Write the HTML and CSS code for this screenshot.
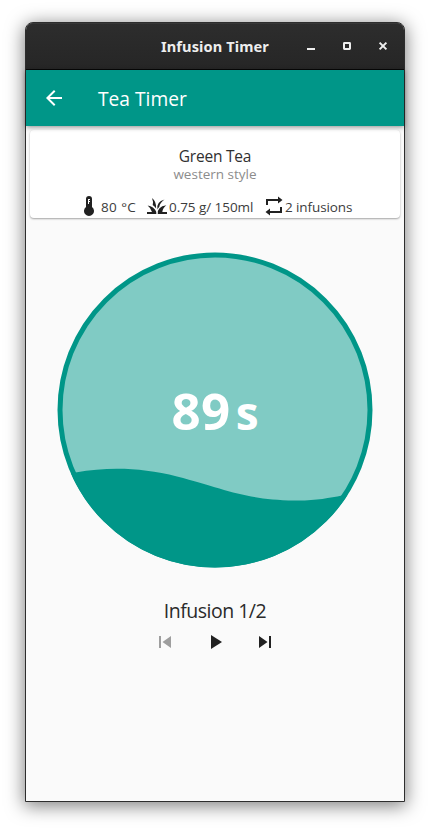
FILE: index.html
```html
<!DOCTYPE html>
<html lang="en">
<head>
<meta charset="utf-8">
<title>Infusion Timer</title>
<link rel="stylesheet" href="styles.css">
</head>
<body>
<div class="window">
  <header class="titlebar">
    <span class="window-title">Infusion Timer</span>
    <div class="controls">
      <svg width="10" height="10" viewBox="0 0 10 10"><path d="M1 7h8v2H1z" fill="#eee"/></svg>
      <svg width="10" height="10" viewBox="0 0 10 10"><rect x="2" y="2" width="6" height="6" rx=".4" fill="none" stroke="#eee" stroke-width="2"/></svg>
      <svg width="10" height="10" viewBox="0 0 10 10"><path d="M1.6 1.6l6.8 6.8M8.4 1.6L1.6 8.4" stroke="#eee" stroke-width="2"/></svg>
    </div>
  </header>
  <nav class="appbar">
    <svg width="24" height="24" viewBox="0 0 24 24"><path d="M20 11H7.83l5.59-5.59L12 4l-8 8 8 8 1.41-1.41L7.83 13H20z" fill="#fff"/></svg>
    <h1>Tea Timer</h1>
  </nav>
  <main>
    <section class="card">
      <h2>Green Tea</h2>
      <p class="style">western style</p>
      <div class="facts">
        <div class="fact temp">
          <svg width="10" height="20" viewBox="0 0 10 20"><path d="M2 3a3 3 0 0 1 6 0v7.9a5 5 0 1 1-6 0z" fill="#212121"/><path d="M4 3h2v1H5v1h1v1H5v2H4z" fill="#fff"/></svg>
          <span>80 °C</span>
        </div>
        <div class="fact amount">
          <svg width="20" height="16" viewBox="0 0 20 16"><path d="M0 16v-2h5Q4 10 .6 7.4Q7 8.5 9 13.2Q9.4 14.4 9.3 16zM5 0Q9.6 3.5 9.1 10.6Q8 8.6 5.7 7.1Q6.6 3.7 5 0zM17.5 1.6Q13 4.7 12.2 9Q11.2 10 10.5 11.4Q9 4.1 17.5 1.6zM19.3 7.2Q15.8 9.8 15.3 14H20v2h-9.2Q10 8.6 19.3 7.2z" fill="#212121"/></svg>
          <span>0.75 g/ 150ml</span>
        </div>
        <div class="fact count">
          <svg width="18" height="20" viewBox="0 0 18 20"><path d="M2 9V4h12M16 11v5H4" fill="none" stroke="#212121" stroke-width="2"/><path d="M13 .5L17.500 4L13 7.500zM5 12.500L.5 16 5 19.500z" fill="#212121"/></svg>
          <span>2 infusions</span>
        </div>
      </div>
    </section>
    <div class="dial">
      <svg class="wave" viewBox="0 0 316 316">
        <defs><clipPath id="disc"><circle cx="158" cy="158" r="157.500"/></clipPath></defs>
        <circle cx="158" cy="158" r="155" fill="#80cbc4" stroke="#009688" stroke-width="5"/>
        <path clip-path="url(#disc)" d="M0 223L18.500 220.500C54 214.500 85 216 120 224.500C168 237 189 248 237 248.500C257 249 272 246 285 243.500L316 238V316H0z" fill="#009688"/>
      </svg>
      <div class="time"><span class="num">89</span><span class="unit">s</span></div>
    </div>
    <p class="progress">Infusion 1/2</p>
    <div class="player">
      <svg class="off" width="24" height="24" viewBox="0 0 24 24"><path d="M6 6h2v12H6zm3.500 6l8.500 6V6z"/></svg>
      <svg width="24" height="24" viewBox="0 0 24 24"><path d="M8 5v14l11-7z"/></svg>
      <svg width="24" height="24" viewBox="0 0 24 24"><path d="M6 18l8.500-6L6 6v12zM16 6v12h2V6h-2z"/></svg>
    </div>
  </main>
</div>
</body>
</html>
```
FILE: styles.css
```css
* { box-sizing: border-box; }
body {
  margin: 0;
  height: 830px;
  padding: 22px 25px 28px;
  overflow: hidden;
  background: #fff;
  font-family: "Open Sans", "Noto Sans", sans-serif;
  color: #212121;
}
h1, h2, p { margin: 0; font-weight: 400; white-space: nowrap; }
svg { display: block; flex: none; }
.window {
  height: 780px;
  border: 1px solid #2d2d2d;
  border-radius: 8px 8px 0 0;
  background: #fafafa;
  box-shadow: 0 3px 18px 1px rgba(0, 0, 0, .5);
  display: flex;
  flex-direction: column;
}
.titlebar {
  height: 47px;
  border-bottom: 1px solid #080808;
  border-radius: 7px 7px 0 0;
  background: linear-gradient(#2d2d2d, #262626);
  box-shadow: inset 0 1px #383838;
  display: flex;
  align-items: center;
  justify-content: flex-end;
  padding-right: 16px;
}
.window-title {
  font: 700 14.6px/20px "Noto Sans", sans-serif;
  letter-spacing: .1px;
  color: #eee;
  margin-right: 37px;
  padding-bottom: 1px;
  white-space: nowrap;
}
.controls { display: flex; gap: 26px; }
.appbar {
  height: 56px;
  flex: none;
  background: #009688;
  box-shadow: 0 1px 5px rgba(0, 0, 0, .45);
  display: flex;
  align-items: center;
  padding-left: 16px;
  gap: 32px;
  color: #fff;
  z-index: 1;
}
.appbar h1 { font-size: 19.2px; line-height: 26px; padding-top: 2px; }
main { display: flex; flex-direction: column; align-items: center; }
.card {
  width: 370px;
  height: 88px;
  margin-top: 4px;
  border-radius: 4px;
  background: #fff;
  box-shadow: 0 1px 2px rgba(0, 0, 0, .35);
  text-align: center;
  padding-top: 15px;
}
.card h2 { font-size: 15.5px; line-height: 22px; letter-spacing: -.2px; color: #303030; }
.style { font-size: 13.5px; line-height: 14px; color: #8c8c8c; }
.facts { display: flex; padding: 15px 0 0 54px; height: 37px; }
.fact { display: flex; align-items: center; height: 20px; font-size: 13.5px; color: #3c3c3c; white-space: nowrap; }
.fact span { padding-top: 1px; }
.temp { width: 63px; gap: 7px; }
.temp span { letter-spacing: .4px; }
.amount { width: 118px; gap: 2px; }
.amount span { letter-spacing: -.05px; }
.count { gap: 2px; }
.count span { letter-spacing: -.1px; }
.dial { display: grid; width: 316px; height: 316px; margin-top: 34px; }
.wave, .time { grid-area: 1 / 1; }
.wave { width: 316px; height: 316px; }
.time {
  z-index: 1;
  display: flex;
  align-items: baseline;
  justify-content: center;
  gap: 5px;
  color: #fff;
  font-weight: 700;
  line-height: 60px;
  padding-top: 128px;
}
.num { font-size: 51px; letter-spacing: .4px; }
.unit { font-size: 46px; }
.progress { font-size: 19.5px; line-height: 28px; margin-top: 29px; letter-spacing: -.5px; color: #2a2a2a; }
.player { display: flex; gap: 26px; margin-top: 5px; fill: #212121; }
.off { fill: #9e9e9e; }
```
